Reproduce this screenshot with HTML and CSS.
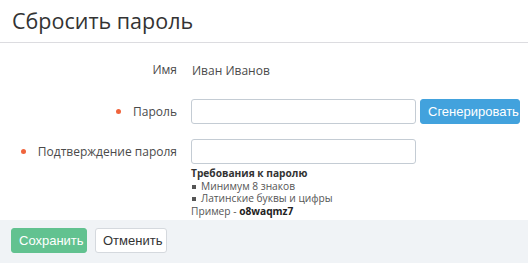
FILE: index.html
```html
<!DOCTYPE html>
<html lang="ru">
<head>
<meta charset="utf-8">
<link rel="stylesheet" href="styles.css">
</head>
<body>
<div class="dialog">
  <div class="header"><h1 class="title">Сбросить пароль</h1></div>
  <div class="form">
    <div class="row row-name">
      <div class="label">Имя</div>
      <div class="field"><span class="value">Иван Иванов</span></div>
    </div>
    <div class="row">
      <div class="label"><span class="req"></span>Пароль</div>
      <div class="field field-inline">
        <input class="input" type="text">
        <button class="btn btn-blue">Сгенерировать</button>
      </div>
    </div>
    <div class="row row-confirm">
      <div class="label"><span class="req"></span>Подтверждение пароля</div>
      <div class="field">
        <input class="input" type="text">
        <div class="hint">
          <div class="hint-title">Требования к паролю</div>
          <ul class="hint-list">
            <li>Минимум 8 знаков</li>
            <li>Латинские буквы и цифры</li>
          </ul>
          <div class="hint-example">Пример - <b>o8waqmz7</b></div>
        </div>
      </div>
    </div>
  </div>
  <div class="footer">
    <button class="btn btn-green">Сохранить</button>
    <button class="btn btn-white">Отменить</button>
  </div>
</div>
</body>
</html>
```
FILE: styles.css
```css
html, body {
  margin: 0;
  padding: 0;
  background: #fff;
}
body {
  font-family: "Open Sans", "DejaVu Sans", sans-serif;
  color: #333;
  width: 528px;
  height: 263px;
  overflow: hidden;
}
.header {
  height: 43px;
  border-bottom: 1px solid #dcdce0;
  padding: 0 12px;
  box-sizing: border-box;
}
.title {
  margin: 0;
  font-weight: 400;
  font-size: 21.5px;
  line-height: 42px;
  color: #333;
}
.form {
  padding-top: 15px;
  height: 162px;
}
.row {
  display: grid;
  grid-template-columns: 177px 1fr;
  column-gap: 14px;
  align-items: start;
  margin-bottom: 15px;
}
.row-name {
  margin-bottom: 16px;
}
.label {
  text-align: right;
  font-size: 12px;
  line-height: 25px;
  color: #4a4a4a;
  display: flex;
  justify-content: flex-end;
  align-items: center;
}
.row-name .label, .row-name .value {
  line-height: 24px;
}
.value {
  font-size: 12px;
  color: #4a4a4a;
  line-height: 24px;
  padding-left: 1px;
}
.req {
  width: 5px;
  height: 5px;
  border-radius: 50%;
  background: #f0643c;
  margin-right: 12px;
  flex: none;
}
.field-inline {
  display: flex;
  gap: 4px;
  align-items: center;
}
.input {
  display: block;
  width: 225px;
  height: 25px;
  box-sizing: border-box;
  border: 1px solid #c4ccd4;
  border-radius: 3px;
  margin: 0;
  padding: 0 6px;
  background: #fff;
  font: inherit;
}
.btn {
  height: 25px;
  box-sizing: border-box;
  border-radius: 3px;
  font-family: "Liberation Sans", Arial, sans-serif;
  font-size: 13px;
  padding: 0 7px;
  margin: 0;
  cursor: pointer;
}
.btn-blue {
  background: #42a2dd;
  border: 1px solid #42a2dd;
  color: #fff;
  width: 100px;
}
.hint {
  font-size: 10.2px;
  line-height: 12.5px;
  color: #555;
  padding-top: 3px;
}
.hint-title {
  font-weight: 700;
  color: #333;
}
.hint-list {
  margin: 0;
  padding: 0 0 0 10px;
  list-style: none;
}
.hint-list li {
  position: relative;
}
.hint-list li::before {
  content: "";
  position: absolute;
  left: -9px;
  top: 5px;
  width: 4px;
  height: 4px;
  background: #555;
}
.hint-example b {
  color: #222;
}
.footer {
  background: #f0f3f6;
  height: 43px;
  padding: 8px 11px;
  box-sizing: border-box;
  display: flex;
  gap: 8px;
}
.btn-green {
  background: #62c290;
  border: 1px solid #62c290;
  color: #fff;
  width: 76px;
}
.btn-white {
  background: #fff;
  border: 1px solid #d5d9de;
  color: #333;
  width: 72px;
}
```
